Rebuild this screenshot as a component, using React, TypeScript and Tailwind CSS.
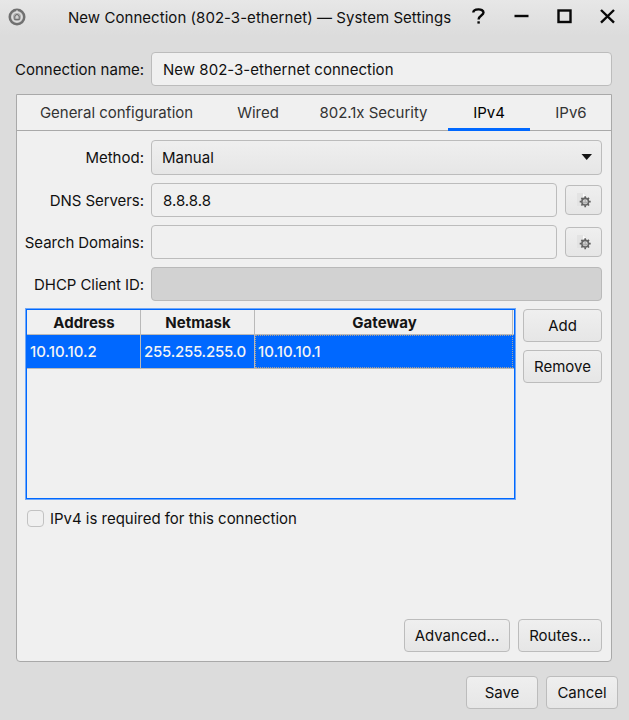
import type { ReactNode } from "react";

const raised = "flex items-center justify-center rounded-[4px] border border-[#bcbcbc] bg-linear-to-b from-[#efefef] to-[#e6e6e6]";
const field = "flex h-[34px] items-center rounded-[4px] border border-[#bcbcbc] bg-[#f0f0f0] pt-[2px] pl-[11px]";

function Button({ className, children }: { className: string; children: ReactNode }) {
  return <button className={`${raised} h-[33px] pt-px ${className}`}>{children}</button>;
}

function Label({ children }: { children: ReactNode }) {
  return <span className="mr-[7px] w-[128px] shrink-0 pt-[2px] text-right tracking-[-0.06px]">{children}</span>;
}

function GearButton() {
  return (
    <button className={`${raised} ml-2 h-[30px] w-[37px]`}>
      <svg width="16" height="16" viewBox="0 0 16 16">
        <path d="M1 1h7l3 3v10H1z" fill="#e3e3e3" />
        <path d="M7 1l4 4H7z" fill="#fcfcfc" />
        <g transform="translate(9.200 9.700)">
          <circle r="3.300" fill="#d8d8d8" stroke="#666" strokeWidth="1.600" />
          <path d="M0-5.500v2M0 3.500v2M-5.500 0h2M3.500 0h2M-3.800-3.800l1.300 1.300M2.500 2.500l1.300 1.300M-3.800 3.800l1.300-1.300M2.500-2.500l1.300-1.300" stroke="#606060" strokeWidth="1.700" />
          <path d="M0-2.500V1M-1.500 0v1.200h3V0" fill="none" stroke="#999" strokeWidth="0.800" />
        </g>
      </svg>
    </button>
  );
}

function TitleBar() {
  return (
    <header className="flex h-9 items-center bg-linear-to-b from-[#e7e7e7] to-[#dcdcdc]">
      <svg width="18" height="18" viewBox="0 0 18 18" className="ml-2 -mt-0.5">
        <circle cx="9" cy="9" r="7.300" fill="#c5c5c5" stroke="#707070" strokeWidth="2.400" />
        <circle cx="9" cy="9" r="4.700" fill="#aaa" stroke="#dedede" strokeWidth="1.400" />
        <path d="M9 2v4" stroke="#e1e1e1" strokeWidth="1" />
        <path d="M6.800 11.400V8.500L9 6l2.200 2.500v2.900z" fill="#d2d2d2" stroke="#707070" strokeWidth="1.100" />
      </svg>
      <h1 className="ml-[42px] w-[404px] whitespace-nowrap tracking-[0.045px]">New Connection (802-3-ethernet) — System Settings</h1>
      <svg width="145" height="20" viewBox="472 6 145 20" className="-mt-1 shrink-0" fill="none" stroke="#080808" strokeWidth="2.400">
        <path d="M473.300 12.600C473.300 8.500 483.500 8 483.500 12.600C483.500 15.500 478.600 15.500 478.600 19.400" />
        <path d="M478.600 21.300v2.300" />
        <path d="M514.500 16H528.500" />
        <rect x="558.500" y="10.500" width="12" height="11.500" />
        <path d="M601 10l13 12.600M614 10l-13 12.600" />
      </svg>
    </header>
  );
}

function Tabs() {
  return (
    <nav className="flex h-9 border-b border-[#a9a9a9] text-[#333] tracking-[-0.02px]">
      <span className="flex w-[199px] items-center justify-center">General configuration</span>
      <span className="flex w-[84px] items-center justify-center">Wired</span>
      <span className="flex w-[147px] items-center justify-center">802.1x Security</span>
      <span className="-mb-px ml-px flex w-[82px] items-center justify-center border-b-[3px] border-[#0068ff] pt-0.5 text-black">IPv4</span>
      <span className="flex w-[81px] items-center justify-center pl-px">IPv6</span>
    </nav>
  );
}

function AddressTable() {
  return (
    <div className="h-[192px] w-[491px] border border-[#70a8f8]">
      <div className="h-full border border-[#0068ff]">
        <div className="grid h-[25px] grid-cols-[114px_114px_259px] border-b border-[#b9b9b9] text-center font-bold tracking-[0.03px] text-[#151515]">
          <span className="border-r border-[#b9b9b9] pl-px leading-[25px]">Address</span>
          <span className="border-r border-[#b9b9b9] pl-px leading-[25px]">Netmask</span>
          <span className="mr-px border-r border-[#b9b9b9] pl-[2px] leading-[25px]">Gateway</span>
        </div>
        <div className="grid h-[34px] grid-cols-[114px_114px_258px] border-b border-[#b9b9b9] bg-[#0068ff] font-medium text-[#f4f4f4]">
          <span className="border-r border-[#b9b9b9] pl-[3px] leading-[33px]">10.10.10.2</span>
          <span className="border-r border-[#b9b9b9] pl-[3px] leading-[33px] tracking-[-0.25px]">255.255.255.0</span>
          <span className="border border-dotted border-[#a6a29c] pl-[2px] leading-[31px]">10.10.10.1</span>
        </div>
      </div>
    </div>
  );
}

export default function App() {
  return (
    <main className="h-[720px] w-[629px] overflow-hidden bg-[#dcdcdc] font-['Inter',sans-serif] text-[15px] leading-5 text-[#101010]">
      <TitleBar />
      <div className="mt-4 ml-[15px] flex w-[597px] items-center">
        <span className="w-[136px] pt-[2px] whitespace-nowrap">Connection name:</span>
        <div className={`${field} flex-1 tracking-[0.02px]`}>New 802-3-ethernet connection</div>
      </div>
      <section className="mt-2 ml-4 flex h-[568px] w-[596px] flex-col rounded-b-[4px] border border-[#a9a9a9] bg-[#f0f0f0]">
        <Tabs />
        <div className="flex flex-1 flex-col pt-[9px] pr-[9px] pb-[9px] pl-2">
          <div className="flex items-center whitespace-nowrap">
            <span className="mr-[7px] w-[119px] text-right">Method:</span>
            <div className="flex h-[35px] flex-1 items-center justify-between rounded-[4px] border border-[#bcbcbc] bg-linear-to-b from-[#efefef] to-[#e6e6e6] pr-[9px] pl-[10px]">
              Manual
              <svg width="11" height="6" viewBox="0 0 11 6" className="-mt-px"><path d="M0.500 0h10.500L5.700 6z" fill="#151515" /></svg>
            </div>
          </div>
          <div className="-ml-[9px] mt-2 flex items-center whitespace-nowrap">
            <Label>DNS Servers:</Label><div className={`${field} flex-1`}>8.8.8.8</div><GearButton />
          </div>
          <div className="-ml-[9px] mt-2 flex items-center whitespace-nowrap">
            <Label>Search Domains:</Label><div className={`${field} flex-1`} /><GearButton />
          </div>
          <div className="-ml-[9px] mt-2 flex items-center whitespace-nowrap">
            <Label>DHCP Client ID:</Label><div className="h-[34px] flex-1 rounded-[4px] border border-[#b9b9b9] bg-[#d2d2d2]" />
          </div>
          <div className="mt-[7px] flex">
            <AddressTable />
            <div className="mt-px ml-[7px] flex flex-col gap-2">
              <Button className="w-[79px]">Add</Button>
              <Button className="w-[79px]">Remove</Button>
            </div>
          </div>
          <label className="mt-[8px] ml-[2px] flex items-center tracking-[-0.02px]">
            <span className="mr-[6px] size-[17px] rounded-[4px] border border-[#c2c2c2]" />
            <span className="pt-px">IPv4 is required for this connection</span>
          </label>
          <div className="mt-auto flex justify-end gap-2">
            <Button className="w-[106px]">Advanced...</Button>
            <Button className="w-[84px]">Routes...</Button>
          </div>
        </div>
      </section>
      <footer className="mt-[14px] mr-[11px] flex justify-end gap-2">
        <Button className="w-[72px]">Save</Button>
        <Button className="w-[72px]">Cancel</Button>
      </footer>
    </main>
  );
}
